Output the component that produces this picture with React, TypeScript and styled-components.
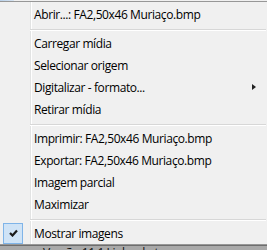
import React from "react";
import styled, { createGlobalStyle } from "styled-components";

const GlobalStyle = createGlobalStyle`
  html, body { margin: 0; padding: 0; background: #f0f0f0; overflow: hidden; }
  #root { width: 267px; height: 250px; overflow: hidden; }
`;

const Page = styled.div`
  width: 267px;
  height: 250px;
  display: flex;
  flex-direction: column;
  overflow: hidden;
  font-family: "Open Sans", "Noto Sans", sans-serif;
  font-size: 12px;
  color: #000;
`;

const TopStrip = styled.div`
  height: 1px;
  flex: none;
  background: linear-gradient(to right, #b9d1ea 0, #d7e4f2 14px, #f0f0f0 14px);
`;

const Menu = styled.div`
  width: 269px;
  flex: none;
  box-sizing: border-box;
  border-top: 1px solid #979797;
  border-bottom: 1px solid #979797;
  padding: 1px 3px 0 0;
  background:
    linear-gradient(to right, transparent 30px, #e2e3e3 30px, #e2e3e3 31px, #ffffff 31px, #ffffff 32px, transparent 32px),
    #f0f0f0;
  display: flex;
  flex-direction: column;
`;

const Item = styled.div`
  height: 22px;
  display: flex;
  align-items: center;
  white-space: nowrap;
`;

const Gutter = styled.div`
  width: 30px;
  height: 100%;
  flex: none;
  display: flex;
  align-items: center;
`;

const Label = styled.span`
  padding-left: 4px;
  letter-spacing: -0.4px;
`;

const Arrow = styled.span`
  margin-left: auto;
  margin-right: 10px;
  width: 0;
  height: 0;
  border-top: 3.5px solid transparent;
  border-bottom: 3.5px solid transparent;
  border-left: 4px solid #222;
`;

const Separator = styled.div`
  height: 7px;
  flex: none;
  display: flex;
  flex-direction: column;
  padding: 4px 0 0 30px;
  box-sizing: border-box;
  &::before {
    content: "";
    display: block;
    height: 1px;
    background: #d7d7d7;
  }
  &::after {
    content: "";
    display: block;
    height: 1px;
    background: #ffffff;
  }
`;

const CheckBox = styled.div`
  margin-left: 3px;
  width: 20px;
  height: 21px;
  box-sizing: border-box;
  border: 1px solid #7fb4e8;
  background: #cfe3f6;
  display: flex;
  align-items: center;
  justify-content: center;
`;

const BottomStrip = styled.div`
  flex: 1;
  background: #a9a9a9;
  border-top: 1px solid #6e6e6e;
  overflow: hidden;
  padding-left: 43px;
  font-size: 12px;
  line-height: 14px;
  white-space: nowrap;
`;

const BottomText = styled.span`
  display: block;
  color: #111;
  letter-spacing: -0.4px;
`;

type Entry =
  | { kind: "item"; label: string; submenu?: boolean; checked?: boolean }
  | { kind: "sep" };

const entries: Entry[] = [
  { kind: "item", label: "Abrir...: FA2,50x46 Muriaço.bmp" },
  { kind: "sep" },
  { kind: "item", label: "Carregar mídia" },
  { kind: "item", label: "Selecionar origem" },
  { kind: "item", label: "Digitalizar - formato...", submenu: true },
  { kind: "item", label: "Retirar mídia" },
  { kind: "sep" },
  { kind: "item", label: "Imprimir: FA2,50x46 Muriaço.bmp" },
  { kind: "item", label: "Exportar: FA2,50x46 Muriaço.bmp" },
  { kind: "item", label: "Imagem parcial" },
  { kind: "item", label: "Maximizar" },
  { kind: "sep" },
  { kind: "item", label: "Mostrar imagens", checked: true },
];

const Check = () => (
  <svg width="9" height="8" viewBox="0 0 9 8">
    <path d="M1 4 L3.5 6.5 L8 1.5" fill="none" stroke="#1a1a1a" strokeWidth="2.2" />
  </svg>
);

export default function App() {
  return (
    <>
      <GlobalStyle />
      <Page>
        <TopStrip />
        <Menu>
          {entries.map((e, i) =>
            e.kind === "sep" ? (
              <Separator key={i} />
            ) : (
              <Item key={i}>
                <Gutter>{e.checked && <CheckBox><Check /></CheckBox>}</Gutter>
                <Label>{e.label}</Label>
                {e.submenu && <Arrow />}
              </Item>
            )
          )}
        </Menu>
        <BottomStrip>
          <BottomText>Versão 11.1 Linha do tempo</BottomText>
        </BottomStrip>
      </Page>
    </>
  );
}
